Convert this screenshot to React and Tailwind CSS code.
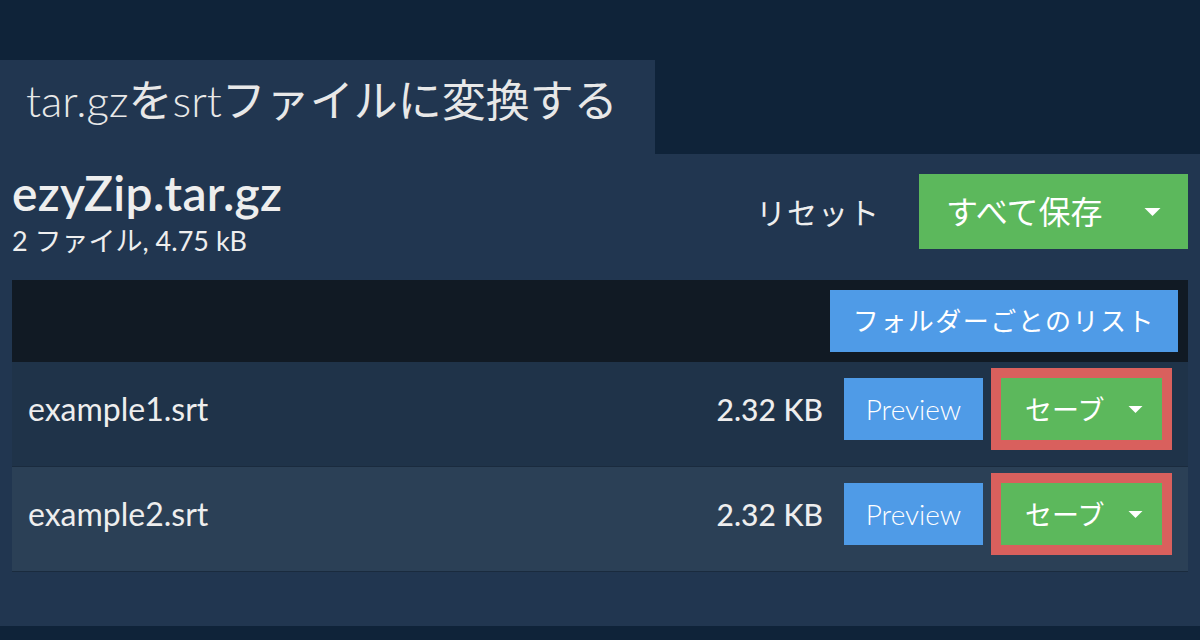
import React from "react";

const files = [
  { name: "example1.srt", size: "2.32 KB", bg: "bg-[#1f3349]" },
  { name: "example2.srt", size: "2.32 KB", bg: "bg-[#2b4056]" },
];

function Caret({ w = 16, h = 8 }) {
  return (
    <svg width={w} height={h} viewBox="0 0 16 8" className="shrink-0">
      <polygon points="0,0 16,0 8,8" fill="#ffffff" />
    </svg>
  );
}

export default function App() {
  return (
    <div className="w-[1200px] h-[640px] flex flex-col bg-[#0f2339] text-[#eeeeee] font-['Lato','Noto_Sans_CJK_JP',sans-serif] overflow-hidden">
      <div className="h-[60px] shrink-0" />

      <div className="w-[655px] h-[94px] shrink-0 bg-[#213650] pl-[26px] pt-[18px]">
        <h1 className="text-[44px] leading-none font-normal text-[#e8e8e8]">
          <span className="font-light">tar.gz</span>を<span className="font-light">srt</span>ファイルに変換する
        </h1>
      </div>

      <div className="h-[472px] shrink-0 bg-[#213650] px-3">
        <div className="h-[126px] flex justify-between items-start">
          <div className="pt-[10px]">
            <div className="text-[48px] leading-[58px] font-semibold tracking-[0.3px]">ezyZip.tar.gz</div>
            <div className="text-[27px] leading-[31px] mt-[3px]">2 ファイル, 4.75 kB</div>
          </div>
          <div className="flex items-center mt-[20px] gap-[39px]">
            <button className="text-[30px] leading-none text-[#eeeeee] tracking-[1px]">リセット</button>
            <button className="w-[269px] h-[75px] bg-[#5cb85c] flex items-center justify-between pl-[27px] pr-[26px] text-white text-[32px] leading-none">
              <span>すべて保存</span>
              <Caret w={19} h={8} />
            </button>
          </div>
        </div>

        <div className="h-[82px] bg-[#111a24] flex items-center justify-end pr-[10px]">
          <button className="h-[62px] px-[23px] bg-[#4f9be7] text-white text-[26px] leading-none tracking-[1.5px]">
            フォルダーごとのリスト
          </button>
        </div>

        {files.map((f) => (
          <div key={f.name} className={`${f.bg} flex items-center pl-4 pr-4 pt-[6px] pb-[16px] border-b border-[#1a2b3e]`}>
            <div className="flex-1 text-[32px] leading-none">{f.name}</div>
            <div className="text-[30px] leading-none font-medium mr-[21px]">{f.size}</div>
            <button className="w-[139px] h-[62px] bg-[#4f9be7] text-white text-[28px] leading-none font-light mr-[8px]">Preview</button>
            <div className="border-[10px] border-[#d9605d]">
              <button className="w-[161px] h-[62px] bg-[#5cb85c] flex items-center justify-between pl-[24px] pr-[19px] text-white text-[27px] leading-none">
                <span>セーブ</span>
                <Caret w={15} h={7} />
              </button>
            </div>
          </div>
        ))}
      </div>

      <div className="flex-1" />
    </div>
  );
}
